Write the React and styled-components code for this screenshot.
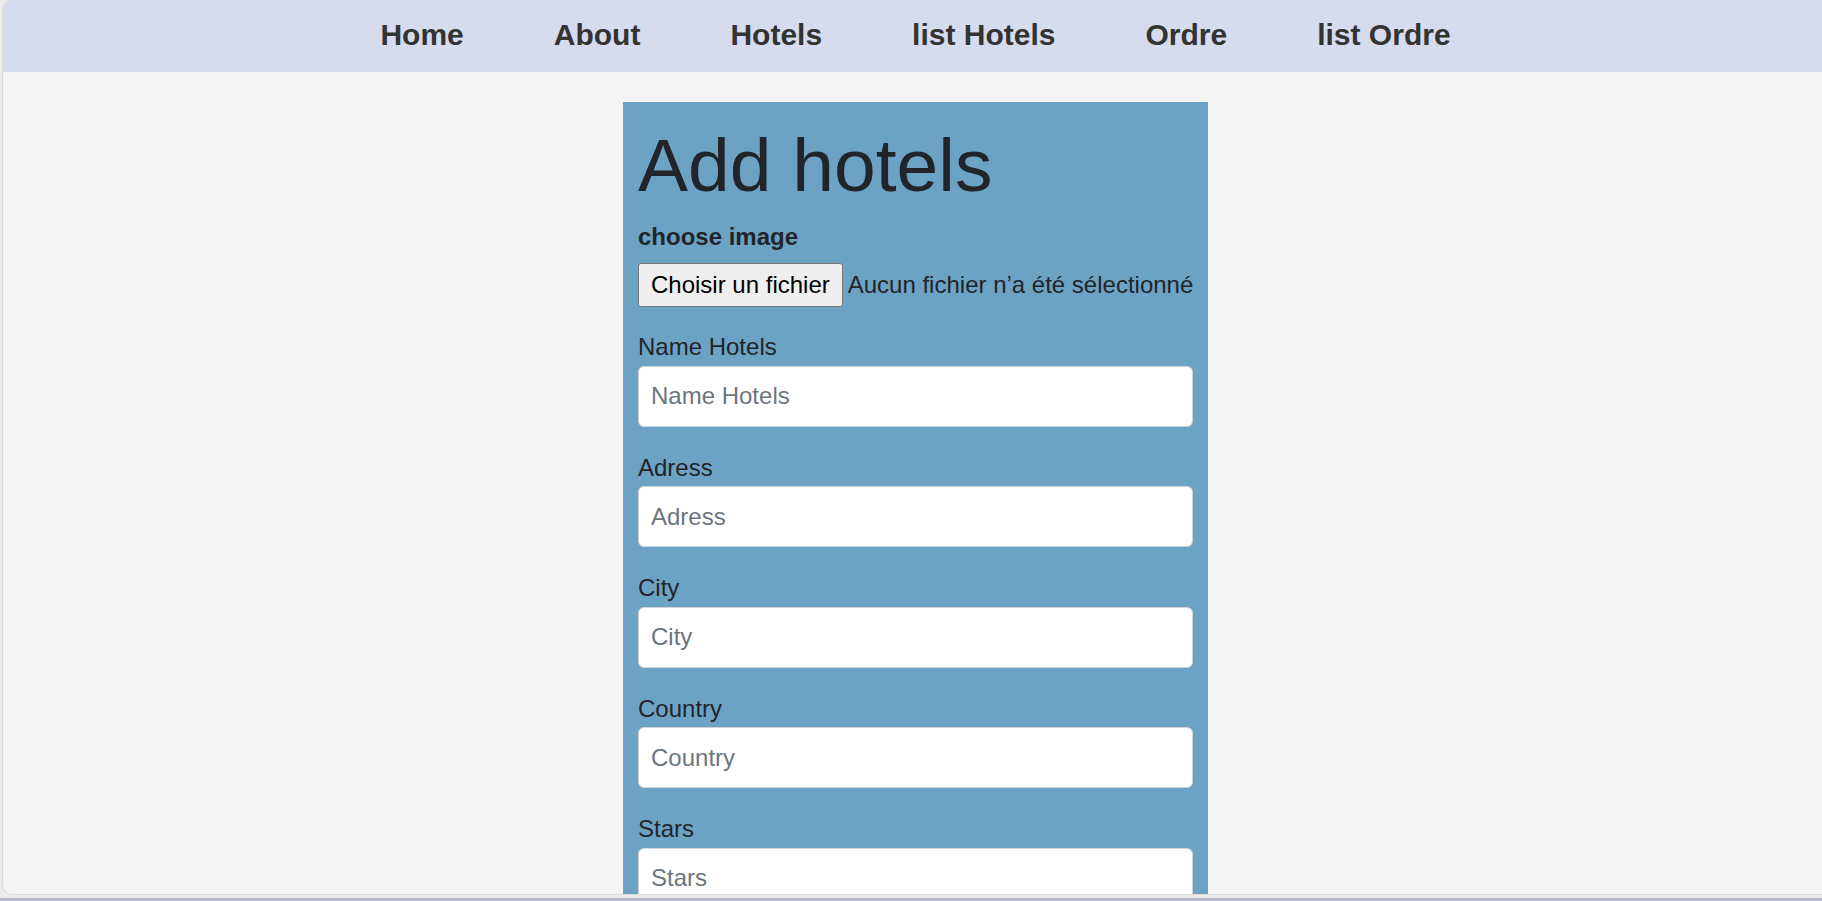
import React from "react";
import styled, { createGlobalStyle } from "styled-components";

const GlobalStyle = createGlobalStyle`
  html, body {
    margin: 0;
    padding: 0;
    height: 100%;
    overflow: hidden;
    background: #ececec;
  }
  body {
    font-family: "Liberation Sans", Arial, sans-serif;
  }
`;

const Frame = styled.div`
  height: 894px;
  margin-left: 2px;
  border-left: 1px solid #dcdcdc;
  border-bottom: 1px solid #dcdcdc;
  border-radius: 10px 0 0 10px;
  background: #f4f4f4;
  overflow: hidden;
`;

const BottomEdge = styled.div`
  height: 3px;
  margin-top: 3px;
  background: #b3bdc7;
`;

const Navbar = styled.nav`
  height: 72px;
  background: #d6dbee;
  display: flex;
  align-items: center;
  justify-content: center;
  padding: 0 0 3px 6px;
  box-sizing: border-box;
`;

const NavLink = styled.a`
  margin: 0 45px;
  font-size: 30px;
  font-weight: 700;
  color: #333333;
  text-decoration: none;
  line-height: 1;
`;

const Main = styled.main`
  display: flex;
  justify-content: center;
  padding: 30px 0 0 6px;
`;

const Card = styled.form`
  width: 585px;
  box-sizing: border-box;
  padding: 15px;
  background: #6ca2c4;
  color: #212529;
`;

const Title = styled.h1`
  margin: 4px 0 0;
  font-size: 75px;
  font-weight: 400;
  line-height: 89px;
  color: #212529;
`;

const ImageLabel = styled.label`
  display: block;
  margin-top: 9px;
  font-size: 24px;
  font-weight: 700;
  line-height: 36px;
`;

const FileRow = styled.div`
  display: flex;
  align-items: center;
  gap: 5px;
  margin: 8px 0 22px;
`;

const FileButton = styled.span`
  height: 44px;
  box-sizing: border-box;
  display: inline-flex;
  align-items: center;
  padding: 0 12px;
  background: #efefef;
  border: 1px solid #767676;
  border-radius: 3px;
  font-size: 24px;
  color: #000;
  white-space: nowrap;
`;

const FileName = styled.span`
  font-size: 24px;
  color: #212529;
  white-space: nowrap;
`;

const Field = styled.div`
  margin-bottom: 23px;
`;

const Label = styled.label`
  display: block;
  font-size: 24px;
  line-height: 36px;
  margin-bottom: 0.5px;
`;

const Input = styled.input`
  display: block;
  width: 100%;
  height: 61px;
  box-sizing: border-box;
  padding: 0 12px;
  border: 1px solid #ced4da;
  border-radius: 6px;
  background: #fff;
  font-family: "Liberation Sans", Arial, sans-serif;
  font-size: 24px;
  color: #212529;
  outline: none;

  &::placeholder {
    color: #6c757d;
  }
`;

const links = ["Home", "About", "Hotels", "list Hotels", "Ordre", "list Ordre"];
const fields = ["Name Hotels", "Adress", "City", "Country", "Stars", "Price"];

export default function App() {
  return (
    <>
      <GlobalStyle />
      <Frame>
        <Navbar>
          {links.map((l) => (
            <NavLink key={l} href="#">
              {l}
            </NavLink>
          ))}
        </Navbar>
        <Main>
          <Card onSubmit={(e) => e.preventDefault()}>
            <Title>Add hotels</Title>
            <ImageLabel>choose image</ImageLabel>
            <FileRow>
              <FileButton>Choisir un fichier</FileButton>
              <FileName>Aucun fichier n’a été sélectionné</FileName>
            </FileRow>
            {fields.map((f) => (
              <Field key={f}>
                <Label>{f}</Label>
                <Input placeholder={f} />
              </Field>
            ))}
          </Card>
        </Main>
      </Frame>
      <BottomEdge />
    </>
  );
}
